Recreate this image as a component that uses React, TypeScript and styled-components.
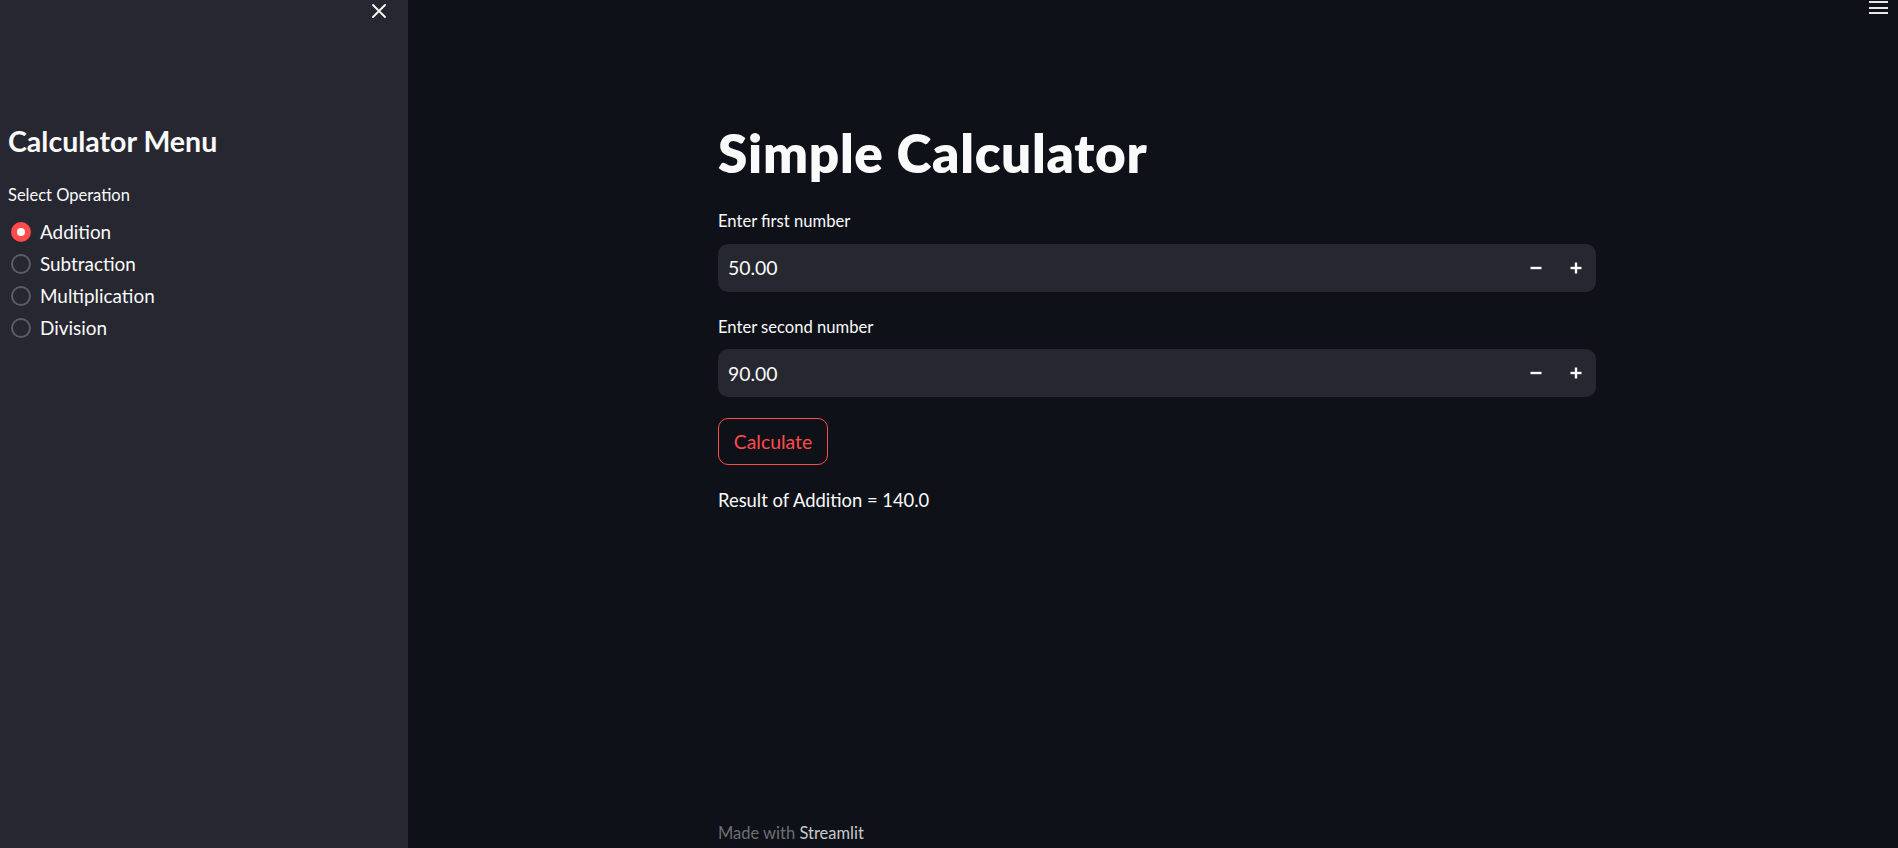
import React from "react";
import styled, { createGlobalStyle } from "styled-components";

const GlobalStyle = createGlobalStyle`
  html, body {
    margin: 0;
    padding: 0;
    background: #0e1117;
    overflow: hidden;
  }
  * { box-sizing: border-box; }
  body {
    font-family: Lato, "Noto Sans", sans-serif;
    color: #fafafa;
  }
`;

const Shell = styled.div`
  display: flex;
  width: 100vw;
  height: 100vh;
`;

const Sidebar = styled.aside`
  width: 408px;
  flex: 0 0 408px;
  background: #262730;
  display: flex;
  flex-direction: column;
`;

const SidebarTop = styled.div`
  display: flex;
  justify-content: flex-end;
  padding: 4px 22px 0 0;
  height: 20px;
`;

const CloseButton = styled.button`
  width: 14px;
  height: 14px;
  padding: 0;
  border: none;
  background: transparent;
  color: #fafafa;
  display: flex;
  align-items: center;
  justify-content: center;
`;

const SidebarBody = styled.div`
  padding: 104px 8px 0 8px;
  display: flex;
  flex-direction: column;
`;

const SideHeading = styled.h2`
  margin: 0;
  font-size: 28.5px;
  font-weight: 700;
  line-height: 1.2;
  color: #fafafa;
`;

const GroupLabel = styled.div`
  margin-top: 28px;
  font-size: 16.5px;
  line-height: 1.2;
  color: #fafafa;
`;

const RadioList = styled.div`
  margin-top: 10px;
  display: flex;
  flex-direction: column;
`;

const RadioRow = styled.label`
  display: flex;
  align-items: center;
  height: 32px;
  gap: 9px;
  padding-left: 3px;
  font-size: 18.9px;
  line-height: 1.2;
  color: #fafafa;
`;

const RadioDot = styled.span<{ $on: boolean }>`
  width: 20px;
  height: 20px;
  border-radius: 50%;
  flex: 0 0 20px;
  display: flex;
  align-items: center;
  justify-content: center;
  background: ${(p) => (p.$on ? "#ff4b4b" : "transparent")};
  border: ${(p) => (p.$on ? "none" : "2px solid #5b5c64")};
  &::after {
    content: "";
    display: ${(p) => (p.$on ? "block" : "none")};
    width: 8px;
    height: 8px;
    border-radius: 50%;
    background: #fafafa;
  }
`;

const Main = styled.main`
  flex: 1;
  display: flex;
  flex-direction: column;
  background: #0e1117;
`;

const TopBar = styled.div`
  display: flex;
  justify-content: flex-end;
  padding: 1px 10px 0 0;
  height: 17px;
`;

const MenuIcon = styled.div`
  width: 19px;
  display: flex;
  flex-direction: column;
  gap: 3.5px;
  span {
    display: block;
    height: 2px;
    background: #e6e6ea;
  }
`;

const Content = styled.div`
  width: 878px;
  margin-left: 310px;
  padding-top: 104px;
  display: flex;
  flex-direction: column;
`;

const Title = styled.h1`
  margin: 0;
  font-size: 53px;
  font-weight: 800;
  letter-spacing: 0.7px;
  line-height: 1.2;
  color: #fafafa;
`;

const FieldLabel = styled.div<{ $gap: number }>`
  margin-top: ${(p) => p.$gap}px;
  font-size: 16.6px;
  line-height: 1.2;
  color: #fafafa;
`;

const NumberBox = styled.div`
  margin-top: 12px;
  height: 48px;
  background: #262730;
  border-radius: 10px;
  display: flex;
  align-items: center;
  padding-left: 10px;
`;

const NumberValue = styled.span`
  flex: 1;
  font-size: 19.4px;
  color: #fafafa;
`;

const StepButton = styled.button`
  width: 40px;
  height: 48px;
  border: none;
  background: transparent;
  color: #fafafa;
  display: flex;
  align-items: center;
  justify-content: center;
  padding: 0;
`;

const CalcButton = styled.button`
  margin-top: 21px;
  align-self: flex-start;
  width: 110px;
  height: 47px;
  border: 1px solid #ff4b4b;
  border-radius: 10px;
  background: transparent;
  color: #ff4b4b;
  font-family: Lato, "Noto Sans", sans-serif;
  font-size: 19.4px;
  padding: 0;
`;

const Result = styled.p`
  margin: 24px 0 0 0;
  font-size: 18.4px;
  line-height: 1.2;
  color: #fafafa;
`;

const Footer = styled.div`
  margin-top: auto;
  margin-left: 310px;
  padding-bottom: 4px;
  font-size: 16.5px;
  line-height: 1.2;
  color: #6d6f75;
  span {
    color: #c8c9cc;
  }
`;

const MinusIcon = () => (
  <svg width="12" height="12" viewBox="0 0 12 12">
    <rect x="0.5" y="4.8" width="11" height="2.4" fill="currentColor" />
  </svg>
);

const PlusIcon = () => (
  <svg width="12" height="12" viewBox="0 0 12 12">
    <rect x="0.5" y="4.8" width="11" height="2.4" fill="currentColor" />
    <rect x="4.8" y="0.5" width="2.4" height="11" fill="currentColor" />
  </svg>
);

const CloseIcon = () => (
  <svg width="14" height="14" viewBox="0 0 14 14">
    <path d="M1 1 L13 13 M13 1 L1 13" stroke="currentColor" strokeWidth="1.8" strokeLinecap="round" />
  </svg>
);

const NumberField = ({ label, value, gap }: { label: string; value: string; gap: number }) => (
  <>
    <FieldLabel $gap={gap}>{label}</FieldLabel>
    <NumberBox>
      <NumberValue>{value}</NumberValue>
      <StepButton aria-label="decrement"><MinusIcon /></StepButton>
      <StepButton aria-label="increment"><PlusIcon /></StepButton>
    </NumberBox>
  </>
);

const operations = ["Addition", "Subtraction", "Multiplication", "Division"];

export default function App() {
  return (
    <>
      <GlobalStyle />
      <Shell>
        <Sidebar>
          <SidebarTop>
            <CloseButton aria-label="close"><CloseIcon /></CloseButton>
          </SidebarTop>
          <SidebarBody>
            <SideHeading>Calculator Menu</SideHeading>
            <GroupLabel>Select Operation</GroupLabel>
            <RadioList>
              {operations.map((op, i) => (
                <RadioRow key={op}>
                  <RadioDot $on={i === 0} />
                  {op}
                </RadioRow>
              ))}
            </RadioList>
          </SidebarBody>
        </Sidebar>
        <Main>
          <TopBar>
            <MenuIcon>
              <span />
              <span />
              <span />
            </MenuIcon>
          </TopBar>
          <Content>
            <Title>Simple Calculator</Title>
            <NumberField label="Enter first number" value="50.00" gap={27} />
            <NumberField label="Enter second number" value="90.00" gap={26} />
            <CalcButton>Calculate</CalcButton>
            <Result>Result of Addition = 140.0</Result>
          </Content>
          <Footer>
            Made with <span>Streamlit</span>
          </Footer>
        </Main>
      </Shell>
    </>
  );
}
